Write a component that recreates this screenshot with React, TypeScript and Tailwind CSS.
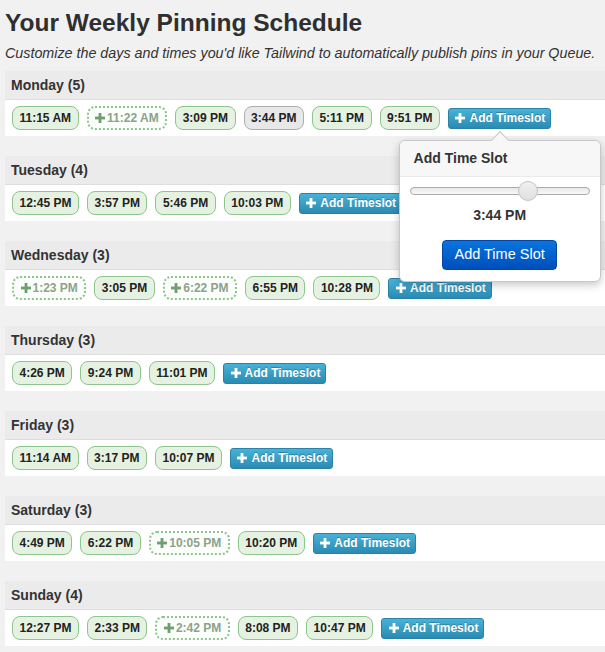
import React from 'react';

type Slot = { time: string; kind?: 'suggested' | 'selected' };

interface Day {
  name: string;
  slots: Slot[];
}

const days: Day[] = [
  {
    name: 'Monday',
    slots: [
      { time: '11:15 AM' },
      { time: '11:22 AM', kind: 'suggested' },
      { time: '3:09 PM' },
      { time: '3:44 PM', kind: 'selected' },
      { time: '5:11 PM' },
      { time: '9:51 PM' },
    ],
  },
  {
    name: 'Tuesday',
    slots: [{ time: '12:45 PM' }, { time: '3:57 PM' }, { time: '5:46 PM' }, { time: '10:03 PM' }],
  },
  {
    name: 'Wednesday',
    slots: [
      { time: '1:23 PM', kind: 'suggested' },
      { time: '3:05 PM' },
      { time: '6:22 PM', kind: 'suggested' },
      { time: '6:55 PM' },
      { time: '10:28 PM' },
    ],
  },
  {
    name: 'Thursday',
    slots: [{ time: '4:26 PM' }, { time: '9:24 PM' }, { time: '11:01 PM' }],
  },
  {
    name: 'Friday',
    slots: [{ time: '11:14 AM' }, { time: '3:17 PM' }, { time: '10:07 PM' }],
  },
  {
    name: 'Saturday',
    slots: [
      { time: '4:49 PM' },
      { time: '6:22 PM' },
      { time: '10:05 PM', kind: 'suggested' },
      { time: '10:20 PM' },
    ],
  },
  {
    name: 'Sunday',
    slots: [
      { time: '12:27 PM' },
      { time: '2:33 PM' },
      { time: '2:42 PM', kind: 'suggested' },
      { time: '8:08 PM' },
      { time: '10:47 PM' },
    ],
  },
];

const Plus: React.FC<{ className?: string; size?: number }> = ({ className, size = 10 }) => (
  <svg width={size} height={size} viewBox="0 0 10 10" className={className} fill="currentColor">
    <rect x="3.6" y="0" width="2.8" height="10" />
    <rect x="0" y="3.6" width="10" height="2.8" />
  </svg>
);

const TimePill: React.FC<{ slot: Slot }> = ({ slot }) => {
  if (slot.kind === 'suggested') {
    return (
      <span className="flex items-center gap-[2px] h-[24px] px-[6.5px] rounded-[8px] border-2 border-dotted border-[#8ec48e] bg-[#fbfdfb] text-[12px] font-bold text-[#8ba38b] leading-none">
        <Plus className="text-[#6f9e6f]" />
        {slot.time}
      </span>
    );
  }
  const selected = slot.kind === 'selected';
  return (
    <span
      className={`flex items-center h-[24px] px-[6.5px] rounded-[8px] border text-[12px] font-bold text-[#222] leading-none ${
        selected ? 'bg-[#e8e8e8] border-[#adadad]' : 'bg-[#e5f2e1] border-[#8cc68c]'
      }`}
    >
      {slot.time}
    </span>
  );
};

const AddButton: React.FC = () => (
  <button className="flex items-center gap-[4px] h-[21px] pl-[6.5px] pr-[5px] rounded-[3px] border border-[#2b81a6] bg-linear-to-b from-[#48b2d7] to-[#2a8bb2] text-white text-[12px] font-bold leading-none [text-shadow:0_-1px_0_rgba(0,0,0,0.25)]">
    <Plus size={10} />
    Add Timeslot
  </button>
);

const TimeSlotPopover: React.FC = () => (
  <div className="absolute left-1/2 -translate-x-1/2 top-[calc(100%+11px)] w-[202px] z-10 rounded-[6px] border border-[#c8c8c8] bg-white shadow-[0_3px_8px_rgba(0,0,0,0.22)]">
    <div className="absolute left-1/2 -ml-[7px] -top-[7px] w-[14px] h-[14px] rotate-45 border-t border-l border-[#c8c8c8] bg-[#f7f7f7]" />
    <div className="relative h-[36px] flex items-center px-[14px] rounded-t-[6px] bg-[#f7f7f7] border-b border-[#ebebeb] text-[14px] font-bold text-[#333]">
      Add Time Slot
    </div>
    <div className="flex flex-col items-center px-[10px] pt-[4px] pb-[11px]">
      <div className="relative w-full h-[20px] flex items-center">
        <div className="w-full h-[8px] rounded-full border border-[#aaa] bg-linear-to-b from-[#e8e8e8] to-[#f8f8f8]" />
        <div className="absolute left-[65.5%] -ml-[10px] top-0 w-[20px] h-[20px] rounded-full border border-[#c3c3c3] bg-linear-to-b from-[#f0f0f0] to-[#e0e0e0]" />
      </div>
      <div className="mt-[6px] text-[14px] leading-[16px] font-bold text-[#333]">3:44 PM</div>
      <button className="mt-[17px] h-[30px] w-[115px] rounded-[4px] border border-[#0446a6] bg-linear-to-b from-[#0b74dc] to-[#004fbd] text-white text-[14.5px] leading-none">
        Add Time Slot
      </button>
    </div>
  </div>
);

const DaySection: React.FC<{ day: Day; withPopover?: boolean }> = ({ day, withPopover }) => (
  <div className="mb-[20px] last:mb-0">
    <div className="h-[29px] flex items-center pl-[6px] bg-[#ebebeb] border-b border-[#dedede] text-[14px] font-bold text-[#333]">
      {day.name} ({day.slots.filter((s) => s.kind !== 'suggested').length})
    </div>
    <div className="h-[36px] flex items-center gap-[8px] pl-[7px] bg-white">
      {day.slots.map((slot, i) => (
        <TimePill key={i} slot={slot} />
      ))}
      <div className="relative">
        <AddButton />
        {withPopover && <TimeSlotPopover />}
      </div>
    </div>
  </div>
);

export default function App() {
  return (
    <div
      className="h-screen overflow-hidden bg-[#f1f1f1] pl-[5px] pt-[9px] text-[#333]"
      style={{ fontFamily: '"Liberation Sans", Arial, sans-serif' }}
    >
      <h1 className="text-[24.5px] leading-[28px] font-bold text-[#2f2f2f]">Your Weekly Pinning Schedule</h1>
      <p className="mt-[6px] text-[14.3px] leading-[20px] italic text-[#333]">
        Customize the days and times you'd like Tailwind to automatically publish pins in your Queue.
      </p>
      <div className="mt-[8px]">
        {days.map((day, i) => (
          <DaySection key={day.name} day={day} withPopover={i === 0} />
        ))}
      </div>
    </div>
  );
}
